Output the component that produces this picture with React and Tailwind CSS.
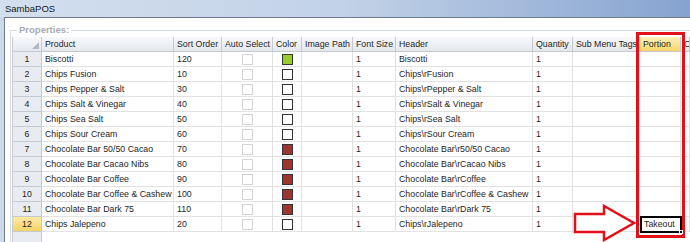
const COLS = 'grid-cols-[29px_132px_48px_51px_29px_51px_43px_137px_40px_67px_41px_1fr]'

const HEADERS = ['Product', 'Sort Order', 'Auto Select', 'Color', 'Image Path', 'Font Size', 'Header', 'Quantity', 'Sub Menu Tags', 'Portion', 'Or']

const ROWS = [
  ['Biscotti', '120', 'green', 'Biscotti'],
  ['Chips Fusion', '10', 'white', 'Chips\\rFusion'],
  ['Chips Pepper & Salt', '30', 'white', 'Chips\\rPepper & Salt'],
  ['Chips Salt & Vinegar', '40', 'white', 'Chips\\rSalt & Vinegar'],
  ['Chips Sea Salt', '50', 'white', 'Chips\\rSea Salt'],
  ['Chips Sour Cream', '60', 'white', 'Chips\\rSour Cream'],
  ['Chocolate Bar 50/50 Cacao', '70', 'brown', 'Chocolate Bar\\r50/50 Cacao'],
  ['Chocolate Bar Cacao Nibs', '80', 'brown', 'Chocolate Bar\\rCacao Nibs'],
  ['Chocolate Bar Coffee', '90', 'brown', 'Chocolate Bar\\rCoffee'],
  ['Chocolate Bar Coffee & Cashew', '100', 'brown', 'Chocolate Bar\\rCoffee & Cashew'],
  ['Chocolate Bar Dark 75', '110', 'brown', 'Chocolate Bar\\rDark 75'],
  ['Chips Jalepeno', '20', 'white', 'Chips\\rJalepeno'],
]

function Swatch({ color }) {
  if (color === 'green') return <span className="block w-[11px] h-[11px] border border-[#333] bg-[#9ccc2c]" />
  if (color === 'brown') return <span className="block w-[11px] h-[11px] border border-[#333] bg-[#9e3530]" />
  return <span className="block w-[11px] h-[11px] border border-[#333] bg-white" />
}

function Cell({ children, className = '' }) {
  return (
    <div className={`h-[15px] border-r border-b border-[#e2e2e2] px-[3px] flex items-center whitespace-nowrap overflow-hidden ${className}`}>
      {children}
    </div>
  )
}

export default function App() {
  return (
    <div className="w-[690px] h-[242px] overflow-hidden relative bg-[#dfe7f1] text-[#1e1e1e] text-[8.8px] leading-none" style={{ fontFamily: '"Liberation Sans", Arial, sans-serif' }}>
      {/* Title bar */}
      <div className="h-[17px] flex items-center px-[5px] bg-gradient-to-r from-[#d3dfee] via-[#c2d2e7] to-[#86a3d0]">
        <span className="text-[9.5px] text-[#1a1a1a]">SambaPOS</span>
      </div>

      {/* Client area */}
      <div className="flex h-[225px]">
        <div className="w-[4px] bg-[#cad8ea]" />
        <div className="flex-1 border-l border-t border-[#6f7a88] bg-white pt-[5px] pl-[5px]">
          {/* Group box */}
          <div className="relative h-full border-l border-t border-[#d5dbe3] mt-[7px] pl-[1px] pt-[6px]">
            <span className="absolute -top-[6px] left-[6px] bg-white px-[2px] text-[#a6acb4] text-[9.5px] font-bold">Properties:</span>

            <div className="border-l border-[#c8ccd2] h-full bg-white">
              {/* Header row */}
              <div className={`grid ${COLS}`}>
                <div className="h-[15px] border-r border-b border-[#c5cad1] bg-gradient-to-b from-[#f7f8fa] to-[#e4e8ee] flex items-end justify-end pr-[2px] pb-[2px]">
                  <svg width="7" height="7" viewBox="0 0 7 7"><path d="M7 0 L7 7 L0 7 Z" fill="#b5b9bf" /></svg>
                </div>
                {HEADERS.map((h) => (
                  <div
                    key={h}
                    className={`h-[15px] border-r border-b border-[#c5cad1] px-[3px] flex items-center whitespace-nowrap overflow-hidden ${h === 'Portion' ? 'bg-gradient-to-b from-[#fdf0b8] to-[#f8d767]' : 'bg-gradient-to-b from-[#f7f8fa] to-[#e4e8ee]'}`}
                  >
                    {h}
                  </div>
                ))}
              </div>

              {/* Rows */}
              {ROWS.map((r, i) => (
                <div key={i} className={`grid ${COLS}`}>
                  <div className={`h-[15px] border-r border-b border-[#c5cad1] flex items-center justify-center ${i === 11 ? 'bg-gradient-to-b from-[#fde9a4] to-[#f7d365]' : 'bg-[#e8ebef]'}`}>
                    {i + 1}
                  </div>
                  <Cell>{r[0]}</Cell>
                  <Cell>{r[1]}</Cell>
                  <Cell className="justify-center">
                    <span className="block w-[11px] h-[11px] border border-[#d4d4d4] bg-white" />
                  </Cell>
                  <Cell className="justify-center"><Swatch color={r[2]} /></Cell>
                  <Cell />
                  <Cell>1</Cell>
                  <Cell>{r[3]}</Cell>
                  <Cell>1</Cell>
                  <Cell />
                  <Cell />
                  <Cell />
                </div>
              ))}

              <div className={`grid ${COLS} h-[20px]`}>
                <div className="bg-[#e8ebef] border-r border-[#c5cad1]" />
              </div>
            </div>
          </div>
        </div>
      </div>

      {/* Annotation: red box around Portion column */}
      <div className="absolute left-[636px] top-[32px] w-[49px] h-[206px] border-[3px] border-[#e3101a]" />

      {/* Annotation: edited cell */}
      <div className="absolute left-[640px] top-[216px] w-[42px] h-[17px] border-2 border-black bg-white flex items-center pl-[2px]">
        Takeout
        <span className="absolute -right-[3px] -bottom-[3px] w-[4px] h-[4px] bg-black border border-white" />
      </div>

      {/* Annotation: arrow */}
      <svg className="absolute left-[573px] top-[204px]" width="64" height="40" viewBox="0 0 64 40">
        <path d="M2 10 L31 10 L31 2 L61 19 L31 36 L31 28 L2 28 Z" fill="white" stroke="#e3101a" strokeWidth="2.5" strokeLinejoin="miter" />
      </svg>
    </div>
  )
}
